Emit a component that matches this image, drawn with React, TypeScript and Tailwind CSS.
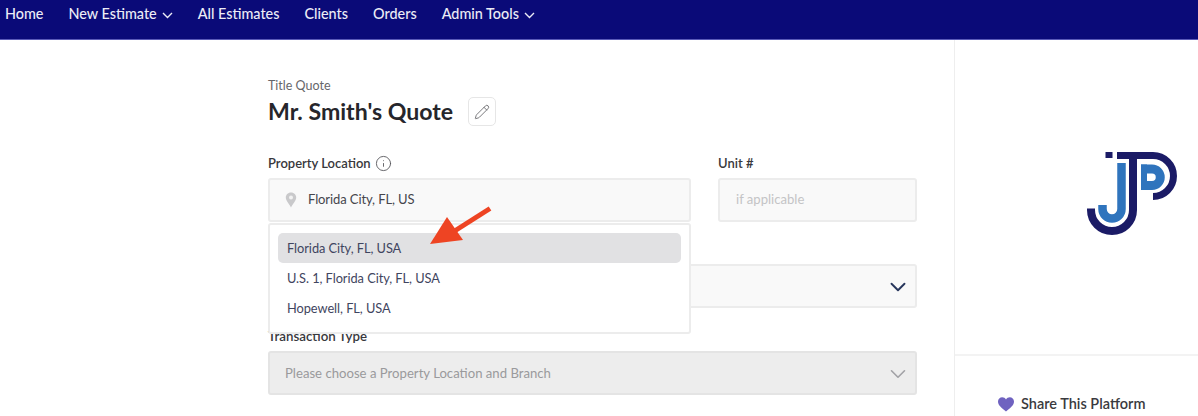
import React from "react";
import { ChevronDown, Pencil, Info } from "lucide-react";

const navItems: { label: string; caret?: boolean }[] = [
  { label: "Home" },
  { label: "New Estimate", caret: true },
  { label: "All Estimates" },
  { label: "Clients" },
  { label: "Orders" },
  { label: "Admin Tools", caret: true },
];

function Logo() {
  return (
    <svg width="96" height="88" viewBox="1085 150 96 88" fill="none">
      <rect x="1105.500" y="152" width="7" height="6" fill="#1b1b66" />
      <path d="M1117 155.500H1153A20.500 20.500 0 0 1 1153 196.500" stroke="#1b1b66" strokeWidth="7" />
      <path d="M1133 155V210A21 21 0 0 1 1091 210V208.500" stroke="#1b1b66" strokeWidth="8" />
      <path d="M1121.500 163V209A9.500 9.500 0 0 1 1102.500 209V205" stroke="#2f74bd" strokeWidth="8.500" />
      <path d="M1141 169H1152A8.250 8.250 0 0 1 1152 185.500H1141" stroke="#2f74bd" strokeWidth="9" />
      <path d="M1144 164.500V190" stroke="#2f74bd" strokeWidth="6" />
    </svg>
  );
}

function Arrow() {
  return (
    <svg className="absolute left-[430px] top-[205px]" width="62" height="42" viewBox="0 0 62 42" fill="none">
      <path d="M60 3.500L23 27" stroke="#ee4423" strokeWidth="5" />
      <path d="M0 39L17 12L33 35Z" fill="#ee4423" />
    </svg>
  );
}

function Caret() {
  return (
    <svg width="11" height="7" viewBox="0 0 11 7" fill="none" className="mt-[2px]">
      <path d="M1 1L5.500 5.500L10 1" stroke="currentColor" strokeWidth="1.400" />
    </svg>
  );
}

export default function App() {
  return (
    <div className="relative h-[416px] w-[1198px] overflow-hidden bg-white font-['Lato','Liberation_Sans',sans-serif] text-[#26262b]">
      <nav className="flex h-[40px] items-start gap-[25px] border-b border-[#5a5ab8] bg-[#0a0a78] pl-[5px] pt-[4px] text-[14.400px] font-medium leading-[20px] text-[#ececf6]">
        {navItems.map((n) => (
          <span key={n.label} className="flex items-center gap-[5px]">
            {n.label}
            {n.caret && <Caret />}
          </span>
        ))}
      </nav>

      <div className="flex h-[376px]">
        <main className="w-[955px] shrink-0 border-r border-[#eeeeee] pl-[268px] pr-[37px] pt-[36px]">
          <div className="text-[12.500px] leading-[20px] text-[#66666a]">Title Quote</div>
          <div className="mt-[1px] flex h-[29px] items-center gap-[15px]">
            <h1 className="text-[23.100px] font-bold leading-[29px] text-[#26262b]">Mr. Smith's Quote</h1>
            <button className="flex h-[29px] w-[28px] items-center justify-center rounded-[5px] border border-[#e6e6e6] bg-white">
              <Pencil className="h-[16px] w-[16px] text-[#5f5f63]" strokeWidth={1.25} />
            </button>
          </div>

          <div className="mt-[29px] grid grid-cols-[423px_199px] gap-x-[27px]">
            <div>
              <div className="flex h-[16px] items-center gap-[4px] text-[13px] font-semibold leading-[16px] text-[#38383c]">
                Property Location
                <Info className="h-[17px] w-[17px] text-[#55555a]" strokeWidth={1.25} />
              </div>
              <div className="mt-[7px] flex h-[44px] items-center rounded-[3px] border-2 border-[#ececec] bg-[#f9f9f9] pl-[15px] text-[13px] tracking-[-0.1px] text-[#45454c]">
                <svg width="12" height="16" viewBox="0 0 12 16" className="mr-[11px]">
                  <path d="M6 0.500C2.800 0.500 0.800 3 0.800 5.500C0.800 8.800 4.500 12 6 15.500C7.500 12 11.200 8.800 11.200 5.500C11.200 3 9.200 0.500 6 0.500Z" fill="#c9c9cb" />
                  <circle cx="6" cy="5.500" r="2" fill="#f2f2f2" />
                </svg>
                Florida City, FL, US
              </div>
            </div>
            <div>
              <div className="h-[16px] text-[13px] font-semibold leading-[16px] text-[#38383c]">Unit #</div>
              <div className="mt-[7px] flex h-[44px] items-center rounded-[3px] border-2 border-[#ececec] bg-[#f9f9f9] pl-[16px] text-[13.100px] text-[#c4c4c6]">
                if applicable
              </div>
            </div>
          </div>

          <div className="mt-[42px] flex h-[44px] items-center justify-end rounded-[3px] border-2 border-[#ececec] bg-[#f9f9f9] pr-[4px]">
            <ChevronDown className="mt-[2px] h-[26px] w-[26px] text-[#27365c]" strokeWidth={1.75} />
          </div>

          <div className="mt-[20px] h-[16px] text-[13.300px] font-semibold leading-[16px] text-[#38383c]">Transaction Type</div>
          <div className="mt-[7px] flex h-[44px] items-center justify-between rounded-[3px] border-2 border-[#e4e4e4] bg-[#ededed] pl-[15px] pr-[4px] text-[13.150px] text-[#9a9a9c]">
            <span className="pt-[2px]">Please choose a Property Location and Branch</span>
            <ChevronDown className="mt-[2px] h-[26px] w-[26px] text-[#a2a2a6]" strokeWidth={1.5} />
          </div>
        </main>

        <aside className="flex min-w-0 flex-1 flex-col">
          <div className="flex h-[316px] items-start justify-end border-b-2 border-[#f3f3f3] pr-[17px] pt-[110px]">
            <Logo />
          </div>
          <div className="flex items-center gap-[7px] pl-[43px] pt-[39px] text-[14.500px] font-semibold leading-[18px] text-[#3a3a3e]">
            <svg width="16" height="15" viewBox="0 0 16 15">
              <path d="M8 14.500C3 10.500 0 8 0 4.500C0 2 2 0.300 4.200 0.300C5.800 0.300 7.200 1.200 8 2.500C8.800 1.200 10.200 0.300 11.800 0.300C14 0.300 16 2 16 4.500C16 8 13 10.500 8 14.500Z" fill="#6f62c0" />
            </svg>
            Share This Platform
          </div>
        </aside>
      </div>

      <div className="absolute left-[268px] top-[223px] h-[111px] w-[423px] rounded-[3px] border-2 border-[#ececec] bg-white px-[8px] pt-[8px] text-[12.800px] tracking-[-0.05px] text-[#3f4560]">
        <div className="flex h-[30px] items-center rounded-[5px] bg-[#e1e1e3] pl-[9px] pt-[2px]">Florida City, FL, USA</div>
        <div className="flex h-[30px] items-center pl-[9px] pt-[2px]">U.S. 1, Florida City, FL, USA</div>
        <div className="flex h-[30px] items-center pl-[9px] pt-[2px]">Hopewell, FL, USA</div>
      </div>
      <Arrow />
    </div>
  );
}
